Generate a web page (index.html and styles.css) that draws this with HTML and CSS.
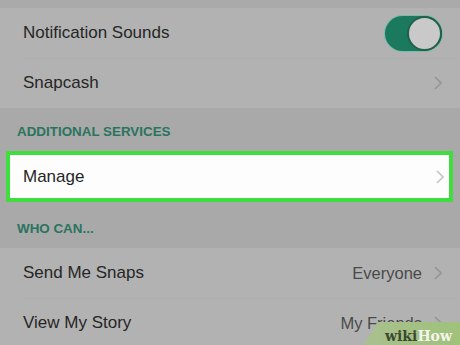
FILE: index.html
```html
<!DOCTYPE html>
<html>
<head>
<meta charset="utf-8">
<link rel="stylesheet" href="styles.css">
</head>
<body>
<div class="screen">
  <div class="topband"></div>
  <div class="group">
    <div class="row">
      <span class="label">Notification Sounds</span>
      <span class="toggle"><span class="knob"></span></span>
    </div>
    <div class="row sep">
      <span class="label">Snapcash</span>
      <svg class="chev" viewBox="0 0 8 14" width="8" height="14"><path d="M1 1 L7 7 L1 13" fill="none" stroke="#959595" stroke-width="1.6"/></svg>
    </div>
  </div>
  <div class="header">ADDITIONAL SERVICES</div>
  <div class="highlight">
    <span class="label">Manage</span>
    <svg class="chev" viewBox="0 0 8 14" width="8" height="14"><path d="M1 1 L7 7 L1 13" fill="none" stroke="#c6c6c6" stroke-width="1.6"/></svg>
  </div>
  <div class="header header2">WHO CAN...</div>
  <div class="group">
    <div class="row">
      <span class="label">Send Me Snaps</span>
      <span class="value">Everyone</span>
      <svg class="chev" viewBox="0 0 8 14" width="8" height="14"><path d="M1 1 L7 7 L1 13" fill="none" stroke="#959595" stroke-width="1.6"/></svg>
    </div>
    <div class="row sep">
      <span class="label">View My Story</span>
      <span class="value">My Friends</span>
      <svg class="chev" viewBox="0 0 8 14" width="8" height="14"><path d="M1 1 L7 7 L1 13" fill="none" stroke="#959595" stroke-width="1.6"/></svg>
    </div>
  </div>
  <div class="wikihow"><span class="wiki">wiki</span><span class="how">How</span></div>
</div>
</body>
</html>
```
FILE: styles.css
```css
html, body {
  margin: 0;
  padding: 0;
}
body {
  width: 460px;
  height: 345px;
  overflow: hidden;
  background: #a9a9a9;
  font-family: "Liberation Sans", Arial, sans-serif;
}
.screen {
  position: relative;
  width: 460px;
  height: 345px;
  overflow: hidden;
  display: flex;
  flex-direction: column;
}
.topband {
  height: 8px;
  background: #aaaaaa;
  flex: none;
}
.group {
  background: #b2b2b2;
  flex: none;
}
.row {
  height: 50px;
  display: flex;
  align-items: center;
  padding: 0 18px 0 23px;
  box-sizing: border-box;
  position: relative;
}
.row.sep::before {
  content: "";
  position: absolute;
  left: 23px;
  right: 0;
  top: 0;
  height: 1px;
  background: #aeaeae;
}
.label {
  font-size: 17px;
  color: #262626;
  flex: 1;
}
.value {
  font-size: 16.5px;
  color: #4a4a4a;
  margin-right: 12px;
}
.chev {
  flex: none;
}
.toggle {
  width: 57px;
  height: 35px;
  border-radius: 18px;
  background: #1b7a5e;
  box-shadow: 0 0 0 1px #7fb8a4;
  position: relative;
  margin-right: 0;
  flex: none;
}
.knob {
  position: absolute;
  right: 0;
  top: 0;
  width: 35px;
  height: 35px;
  box-sizing: border-box;
  border-radius: 50%;
  background: #c9c9c9;
  border: 2px solid #22604e;
}
.header {
  height: 43px;
  display: flex;
  align-items: center;
  padding-left: 17px;
  padding-top: 3px;
  box-sizing: border-box;
  font-size: 13.4px;
  font-weight: bold;
  color: #2a745f;
  flex: none;
}
.header2 {
  height: 46px;
  padding-top: 6px;
}
.highlight {
  height: 51px;
  margin: 0 7px 0 6px;
  border: 4px solid #3fdd3f;
  background: #fdfdfd;
  box-sizing: border-box;
  display: flex;
  align-items: center;
  padding: 0 5px 0 13px;
  flex: none;
}
.wikihow {
  position: absolute;
  right: 0;
  bottom: 0;
  width: 96px;
  height: 23px;
  background: linear-gradient(90deg, #a9c08f, #9fc27b);
  clip-path: polygon(14px 0, 100% 0, 100% 100%, 0 100%);
  padding: 7px 0 0 21px;
  box-sizing: border-box;
  font-family: "DejaVu Serif", "Liberation Serif", serif;
  font-weight: bold;
  font-size: 14px;
  line-height: 14px;
  white-space: nowrap;
}
.wiki {
  color: #3d4a30;
}
.how {
  color: #f4f4ec;
}
```
